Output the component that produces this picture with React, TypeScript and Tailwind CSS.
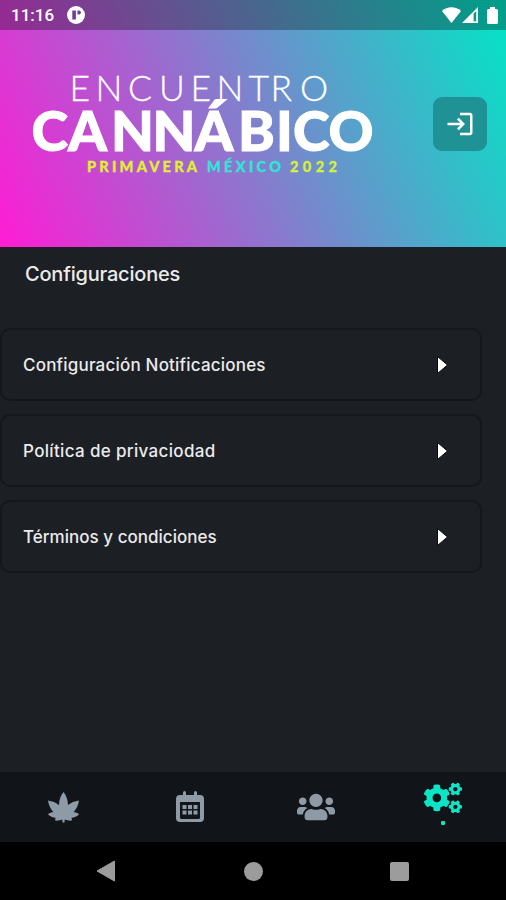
import type { ReactNode } from "react";
import { FaCogs, FaUsers } from "react-icons/fa";
import { MdLogin } from "react-icons/md";

const options = [
    { label: "Configuración Notificaciones", tracking: "tracking-[0.2px]" },
    { label: "Política de privaciodad", tracking: "tracking-[0.34px]" },
    { label: "Términos y condiciones", tracking: "tracking-[0.02px]" },
];

function StatusBar() {
    return (
        <div className="flex h-[30px] items-center bg-black/30 pl-[11px] pr-2 text-white">
            <span className="pt-px font-[Roboto] text-[17px] font-medium leading-none">11:16</span>
            <svg className="ml-[13px] h-[18px] w-[18px]" viewBox="0 0 18 18">
                <circle cx="9" cy="9" r="9" fill="currentColor" />
                <path d="M5.300 4.500h3.600v9H5.300z" fill="#70408f" />
                <path d="M10.500 4.500h1.400a2 2 0 0 1 0 4h-1.400z" fill="#70408f" />
            </svg>
            <div className="ml-auto flex items-center">
                <svg className="h-4 w-[19px]" viewBox="0 0 19 16" fill="currentColor">
                    <path d="M0 4C5-.9 14-.9 19 4L9.500 16z" />
                </svg>
                <svg className="ml-[1px] h-4 w-[17px]" viewBox="0 0 17 16">
                    <path d="M0 16 16 0v16z" fill="currentColor" />
                    <path d="M11.600 6.600v7.600h2.600V4z" fill="#169583" />
                </svg>
                <svg className="ml-[8px] h-[17px] w-[11px]" viewBox="0 0 11 17" fill="currentColor">
                    <path d="M3 0h5v2h1.500A1.500 1.500 0 0 1 11 3.500v12A1.500 1.500 0 0 1 9.500 17h-8A1.500 1.500 0 0 1 0 15.500v-12A1.500 1.500 0 0 1 1.500 2H3z" />
                </svg>
            </div>
        </div>
    );
}

function Logo() {
    return (
        <svg className="h-[112px] w-[350px]" viewBox="28 66 350 112" fontFamily="Lato, sans-serif" fill="#fff">
            <text x="69.500 95.500 128 159 190.500 216.500 248.500 270.500 300" y="100.500" fontSize="35.500" fontWeight="300" stroke="#fff" strokeWidth="0.3">ENCUENTRO</text>
            <text x="31.500 68 111 152.500 194.500 238 276 293 328.500" y="151" fontSize="55.500" fontWeight="900" stroke="#fff" strokeWidth="1">CANNÁBICO</text>
            <g fontSize="14.500" fontWeight="900" strokeWidth="0.3">
                <text x="87" y="172" textLength="110" fill="#e0ee35" stroke="#e0ee35">PRIMAVERA</text>
                <text x="207" y="172" textLength="74" fill="#2ee6d2" stroke="#2ee6d2">MÉXICO</text>
                <text x="290" y="172" textLength="47" fill="#d5ee40" stroke="#d5ee40">2022</text>
            </g>
        </svg>
    );
}

function LeafIcon() {
    return (
        <svg className="h-[31px] w-[31px]" viewBox="0 0 31 31" fill="currentColor">
            <path d="M15.500 0C18 3 19.900 7.500 20 13C23 10.600 26.500 9.200 31 8.500C30.300 13.200 28.300 17.300 25.500 20.300C27.500 20.300 29.500 20.700 31 22.300C29 24.500 26 25.900 23.500 25.800L24 28.500C21.500 29 19 28.200 16.800 27.500L16.500 30.500H14.500L14.200 27.500C12 28.200 9.500 29 7 28.500L7.500 25.800C5 25.900 2 24.500 0 22.300C1.500 20.700 3.500 20.300 5.500 20.300C2.700 17.300 .7 13.200 0 8.500C4.500 9.200 8 10.600 11 13C11.100 7.500 13 3 15.500 0Z" />
        </svg>
    );
}

function CalendarIcon() {
    return (
        <svg className="h-[32px] w-[28px]" viewBox="0 0 28 32" fill="currentColor">
            <path fillRule="evenodd" d="M7 1.500a1.500 1.500 0 0 1 3 0V4h8V1.500a1.500 1.500 0 0 1 3 0V4h3a4 4 0 0 1 4 4v19a4 4 0 0 1-4 4H4a4 4 0 0 1-4-4V8a4 4 0 0 1 4-4h3zM4 11v15.500a1.500 1.500 0 0 0 1.500 1.500h17a1.500 1.500 0 0 0 1.500-1.500V11z" />
            <path d="M6.500 14h4v4h-4zM12 14h4v4h-4zM17.500 14h4v4h-4zM6.500 19.500h4v4h-4zM12 19.500h4v4h-4zM17.500 19.500h4v4h-4z" />
        </svg>
    );
}

function OptionRow({ label, tracking }: { label: string; tracking: string }) {
    return (
        <button className="flex h-[73px] w-[482px] items-center justify-between rounded-[10px] border-2 border-[#14171c] pl-[21px] pr-[32px] text-left">
            <span className={`whitespace-nowrap pt-[3px] text-[17px] font-medium text-[#ebebec] ${tracking}`}>{label}</span>
            <svg className="h-[18px] w-[11px]" viewBox="0 0 11 18">
                <path d="M.5.500v17L10.500 9z" fill="#fff" stroke="#080a0d" strokeWidth="1" />
            </svg>
        </button>
    );
}

function Tab({ children }: { children: ReactNode }) {
    return <button className="flex flex-1 items-center justify-center text-[#8e9aa6]">{children}</button>;
}

export default function App() {
    return (
        <div className="flex h-[900px] w-[506px] flex-col overflow-hidden bg-[#1c1f24] font-[Inter,sans-serif]">
            <header className="h-[247px] bg-[linear-gradient(66deg,#ff1cd5,#00e6c6)]">
                <StatusBar />
                <div className="flex items-start pl-7 pr-[19px] pt-9">
                    <Logo />
                    <button className="ml-auto mt-[31px] flex h-[54px] w-[54px] items-center justify-center rounded-[9px] bg-[#1f9296] text-white">
                        <MdLogin className="h-[30px] w-[30px]" />
                    </button>
                </div>
            </header>

            <main className="flex-1">
                <h1 className="pl-[25px] pt-3 text-[20px] font-medium leading-[30px] tracking-[-0.2px] text-[#ebebec]">Configuraciones</h1>
                <div className="mt-[39px] flex flex-col gap-[13px]">
                    {options.map((option) => (
                        <OptionRow key={option.label} {...option} />
                    ))}
                </div>
            </main>

            <nav className="flex h-[70px] bg-[#111519]">
                <Tab><LeafIcon /></Tab>
                <Tab><CalendarIcon /></Tab>
                <Tab><FaUsers className="h-[38px] w-[38px]" /></Tab>
                <button className="flex flex-1 flex-col items-center pt-[7px] text-[#0ce4c6]">
                    <FaCogs className="h-[38px] w-[38px]" />
                    <span className="mt-1 h-1 w-1 rounded-[1px] bg-current" />
                </button>
            </nav>

            <div className="flex h-[58px] items-center bg-black pl-[96px] text-[#9c9c9c]">
                <svg className="h-[22px] w-[19px]" viewBox="0 0 19 22" fill="currentColor">
                    <path d="M18.500 1v20L1 11z" stroke="currentColor" strokeLinejoin="round" />
                </svg>
                <span className="ml-[129px] h-[19px] w-[19px] rounded-full bg-current" />
                <span className="ml-[127px] h-[19px] w-[19px] rounded-[2px] bg-current" />
            </div>
        </div>
    );
}
